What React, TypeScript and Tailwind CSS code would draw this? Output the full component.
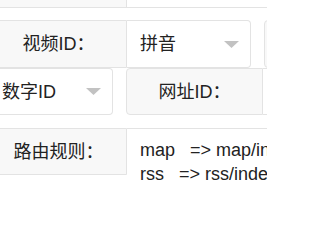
import React from 'react';

const font = "[font-family:'Liberation_Sans','Noto_Sans_CJK_SC',sans-serif]";

function Label({ text, className = '' }: { text: string; className?: string }) {
  return (
    <div
      className={`shrink-0 w-[137px] flex items-center justify-center bg-[#f8f8f8] border border-[#e3e3e3] rounded-l-[4px] ${className}`}
    >
      <span className="leading-none">{text}</span>
    </div>
  );
}

function Select({ value }: { value: string }) {
  return (
    <div className="shrink-0 w-[124px] flex items-center justify-between pl-[13px] pr-[11px] bg-white border border-l-0 border-[#e3e3e3] rounded-r-[4px]">
      <span className="leading-none">{value}</span>
      <svg width="15" height="7" viewBox="0 0 15 7" className="shrink-0">
        <path d="M0 0 L15 0 L7.5 7 Z" fill="#c2c2c2" />
      </svg>
    </div>
  );
}

export default function App() {
  return (
    <div className={`w-[267px] h-[209px] overflow-hidden bg-white text-[18px] text-[#222] ${font}`}>
      {/* tail of the row above */}
      <div className="flex h-[8px] -ml-[10px]">
        <div className="shrink-0 w-[137px] bg-[#f8f8f8] border-r border-b border-[#e3e3e3]" />
        <div className="shrink-0 w-[400px] border-b border-[#e3e3e3]" />
      </div>

      <div className="flex h-[48px] mt-[12px] -ml-[10px] gap-[13px]">
        <div className="flex shrink-0">
          <Label text="视频ID：" />
          <Select value="拼音" />
        </div>
        <div className="flex shrink-0">
          <Label text="" />
          <Select value="" />
        </div>
      </div>

      <div className="flex h-[47px] -ml-[148px] gap-[13px]">
        <div className="flex shrink-0">
          <Label text="" />
          <Select value="数字ID" />
        </div>
        <div className="flex shrink-0">
          <Label text="网址ID：" />
          <div className="shrink-0 w-[124px] bg-white border border-l-0 border-[#e3e3e3]" />
        </div>
      </div>

      <div className="flex mt-[13px] -ml-[10px] items-start">
        <Label text="路由规则：" className="h-[47px]" />
        <div className="shrink-0 w-[400px] h-[120px] bg-white border border-l-0 border-[#e3e3e3] pl-[13px] pt-[9px] leading-[24px] whitespace-pre">
          <div>{'map   => map/index'}</div>
          <div>{'rss   => rss/index'}</div>
        </div>
      </div>
    </div>
  );
}
